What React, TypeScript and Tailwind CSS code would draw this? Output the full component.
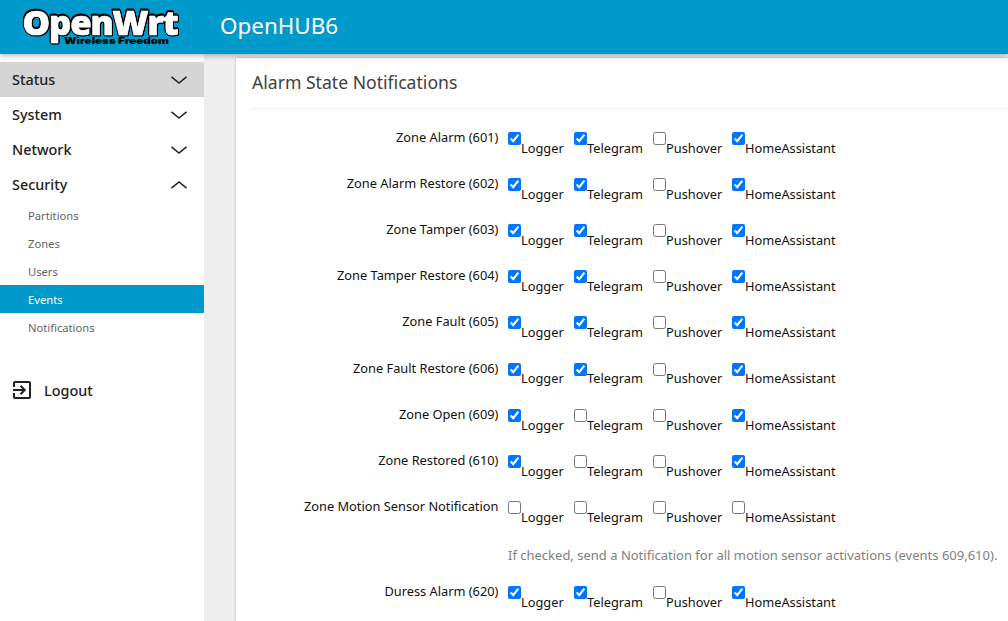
import React from "react";

const menu = [
  { name: "Status", active: true },
  { name: "System" },
  { name: "Network" },
  { name: "Security", open: true },
];
const submenu = ["Partitions", "Zones", "Users", "Events", "Notifications"];
const channels = [
  { name: "Logger", width: "w-[66px]" },
  { name: "Telegram", width: "w-[79px]" },
  { name: "Pushover", width: "w-[79px]" },
  { name: "HomeAssistant", width: "w-[110px]" },
];
const rows = [
  { label: "Zone Alarm (601)", on: [true, true, false, true] },
  { label: "Zone Alarm Restore (602)", on: [true, true, false, true] },
  { label: "Zone Tamper (603)", on: [true, true, false, true] },
  { label: "Zone Tamper Restore (604)", on: [true, true, false, true] },
  { label: "Zone Fault (605)", on: [true, true, false, true] },
  { label: "Zone Fault Restore (606)", on: [true, true, false, true] },
  { label: "Zone Open (609)", on: [true, false, false, true] },
  { label: "Zone Restored (610)", on: [true, false, false, true] },
  {
    label: "Zone Motion Sensor Notification",
    on: [false, false, false, false],
    help: "If checked, send a Notification for all motion sensor activations (events 609,610).",
  },
  { label: "Duress Alarm (620)", on: [true, true, false, true] },
];

function Logo() {
  return (
    <svg width="164" height="54" viewBox="0 0 164 54" className="ml-[18px] shrink-0 overflow-visible" aria-label="OpenWrt">
      <text x="4.5" y="34.5" textLength="155" lengthAdjust="spacingAndGlyphs" fontSize="33" fontWeight="800"
        letterSpacing="-1" fill="#fff" stroke="#fff" strokeWidth="0.7"
        className="font-['Open_Sans',sans-serif] [filter:drop-shadow(1px_0.5px_0_#000)_drop-shadow(-1px_-0.5px_0_#000)_drop-shadow(0_1px_0_#000)_drop-shadow(0_-0.6px_0_#000)]">OpenWrt</text>
      <text x="46" y="44" textLength="105" lengthAdjust="spacingAndGlyphs" fontSize="9" fontWeight="900"
        fill="#000" className="font-['Inter',sans-serif]">Wireless Freedom</text>
    </svg>
  );
}

function Chevron({ up }: { up?: boolean }) {
  return (
    <svg width="16" height="8" viewBox="0 0 16 8" fill="none" stroke="#202124" strokeWidth="1.5">
      <path d={up ? "M.5 7.2 8 1l7.5 6.2" : "M.5.8 8 7 15.5.8"} />
    </svg>
  );
}

export default function App() {
  return (
    <div className="flex h-[621px] w-[1008px] flex-col overflow-hidden bg-[#eee] font-['Noto_Sans',sans-serif] text-[12.8px] text-[#111]">
      <header className="relative z-10 flex h-[54px] shrink-0 bg-[#0099cc] shadow-[0_2px_5px_rgba(0,0,0,0.26)]">
        <Logo />
        <h1 className="ml-[38px] mt-[10px] text-[22.4px] leading-8 text-white">OpenHUB6</h1>
      </header>
      <div className="flex min-h-0 flex-1">
        <nav className="w-[204px] shrink-0 bg-white pt-2 text-[#202124]">
          {menu.map((m) => (
            <div key={m.name} className={`flex h-[35px] items-center justify-between pl-3 pr-[17px] text-[14.4px] font-medium ${m.active ? "bg-[#d4d4d4]" : ""}`}>
              <span>{m.name}</span>
              <Chevron up={m.open} />
            </div>
          ))}
          <ul className="mt-[-1px]">
            {submenu.map((s) => (
              <li key={s} className={`flex h-7 items-center pl-7 pt-[2px] text-[11.2px] ${s === "Events" ? "bg-[#0099cc] text-white" : "text-[#5f6368]"}`}>{s}</li>
            ))}
          </ul>
          <div className="mt-[38px] flex h-[22px] items-center gap-3 pl-3 text-[14.4px] font-medium">
            <svg width="20" height="20" viewBox="0 0 20 20" fill="none" stroke="#202124" strokeWidth="2">
              <path d="M2 7V3q0-1 1-1h14q1 0 1 1v14q0 1-1 1H3q-1 0-1-1v-4M1 10h11M8.5 5.8l4.2 4.2-4.2 4.2" />
            </svg>
            <span className="pt-[2px]">Logout</span>
          </div>
        </nav>
        <main className="ml-8 mt-1 flex-1 overflow-visible bg-white pl-4 shadow-[0_0_2px_rgba(0,0,0,0.3)]">
          <h2 className="h-[51px] border-b border-[#eee] pt-3 text-[17.6px] leading-6 text-[#404040]">Alarm State Notifications</h2>
          <div className="pt-[17.85px]">
            {rows.map((r) => (
              <React.Fragment key={r.label}>
                <div className="flex h-[46.15px]">
                  <div className="w-[246.4px] text-right leading-5">{r.label}</div>
                  <div className="ml-[9.6px] flex">
                    {channels.map((c, i) => (
                      <label key={c.name} className={`flex ${c.width}`}>
                        <input type="checkbox" defaultChecked={r.on[i]} className="mt-[5px] size-[13px] shrink-0" />
                        <span className="mt-[10.85px] leading-5">{c.name}</span>
                      </label>
                    ))}
                  </div>
                </div>
                {r.help && <p className="ml-[256px] h-[39px] whitespace-nowrap pt-[3px] text-[13px] leading-5 text-[#808080]">{r.help}</p>}
              </React.Fragment>
            ))}
          </div>
        </main>
      </div>
    </div>
  );
}
